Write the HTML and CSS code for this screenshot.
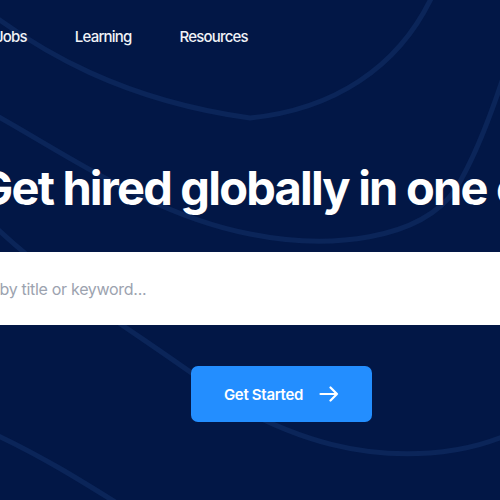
FILE: index.html
```html
<!DOCTYPE html>
<html>
<head>
<meta charset="utf-8">
<link rel="stylesheet" href="styles.css">
</head>
<body>
<div class="hero">
  <svg class="bg-lines" width="500" height="500" viewBox="0 0 500 500" fill="none">
    <path d="M-10 13 C 40 50, 120 100, 250 118 C 330 110, 400 70, 435 -10" />
    <path d="M-10 112 C 60 150, 150 215, 250 234 C 330 250, 420 240, 455 190 C 480 150, 500 90, 515 40" />
    <path d="M-10 222 C 60 290, 150 340, 240 408 C 300 440, 360 458, 430 453 C 470 450, 495 440, 510 434" />
    <path d="M-10 432 C 40 455, 80 480, 120 505" />
  </svg>
  <nav class="nav">
    <a class="nav-link">Jobs</a>
    <a class="nav-link">Learning</a>
    <a class="nav-link">Resources</a>
  </nav>
  <h1 class="title">Get hired globally in one click</h1>
  <div class="search">
    <span class="placeholder">Search by title or keyword...</span>
  </div>
  <div class="cta-row">
    <button class="cta">Get Started
      <svg class="arrow" width="20" height="16" viewBox="0 0 20 16" fill="none" stroke="#fff" stroke-width="2.2" stroke-linecap="round" stroke-linejoin="round">
        <path d="M1.5 8 H18 M11.5 1.5 L18 8 L11.5 14.5" />
      </svg>
    </button>
  </div>
</div>
</body>
</html>
```
FILE: styles.css
```css
html, body {
  margin: 0;
  padding: 0;
}
body {
  width: 500px;
  height: 500px;
  overflow: hidden;
  background: #021746;
  font-family: Inter, "Noto Sans", sans-serif;
}
.hero {
  position: relative;
  width: 500px;
  height: 500px;
  overflow: hidden;
}
.bg-lines {
  position: absolute;
  left: 0;
  top: 0;
}
.bg-lines path {
  stroke: #0b2559;
  stroke-width: 5;
}
.nav {
  position: relative;
  display: flex;
  gap: 48px;
  margin-left: -5px;
  padding-top: 27px;
  height: 20px;
}
.nav-link {
  color: #f1f3f7;
  font-size: 15px;
  line-height: 20px;
  font-weight: 500;
  letter-spacing: -0.8px;
}
.title {
  position: relative;
  margin: 0;
  margin-top: 111px;
  margin-left: -22px;
  white-space: nowrap;
  color: #ffffff;
  font-size: 47px;
  font-weight: 700;
  letter-spacing: -1.8px;
  line-height: 60px;
}
.search {
  position: relative;
  margin-top: 34px;
  margin-left: -120px;
  width: 800px;
  height: 73px;
  background: #ffffff;
  display: flex;
  align-items: center;
}
.placeholder {
  color: #9ca3af;
  font-size: 16px;
  letter-spacing: -0.3px;
  margin-left: 64px;
}
.cta-row {
  position: relative;
  display: flex;
  padding-left: 191px;
  margin-top: 41px;
}
.cta {
  width: 181px;
  height: 56px;
  border: none;
  border-radius: 7px;
  background: #238eff;
  color: #ffffff;
  font-family: Inter, "Noto Sans", sans-serif;
  font-size: 15px;
  font-weight: 600;
  letter-spacing: -0.3px;
  display: flex;
  align-items: center;
  justify-content: center;
  gap: 16px;
  padding: 0;
}
.arrow {
  display: block;
}
```
